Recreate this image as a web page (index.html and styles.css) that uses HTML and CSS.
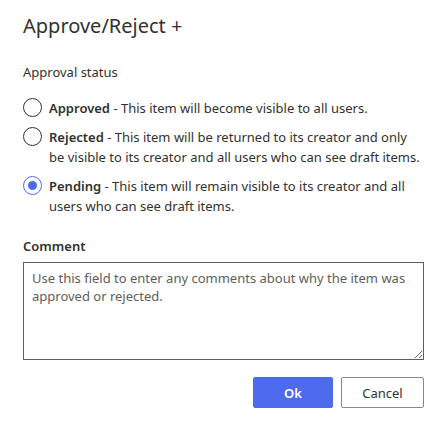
FILE: index.html
```html
<!DOCTYPE html>
<html>
<head>
<meta charset="utf-8">
<link rel="stylesheet" href="styles.css">
</head>
<body>
<div class="dialog">
  <h1 class="title">Approve/Reject +</h1>
  <div class="label status-label">Approval status</div>
  <div class="options">
    <div class="option">
      <span class="radio"></span>
      <div class="opt-text"><b>Approved</b> - This item will become visible to all users.</div>
    </div>
    <div class="option">
      <span class="radio"></span>
      <div class="opt-text"><b>Rejected</b> - This item will be returned to its creator and only<br>be visible to its creator and all users who can see draft items.</div>
    </div>
    <div class="option">
      <span class="radio checked"></span>
      <div class="opt-text"><b>Pending</b> - This item will remain visible to its creator and all<br>users who can see draft items.</div>
    </div>
  </div>
  <div class="label comment-label">Comment</div>
  <textarea class="comment" placeholder="Use this field to enter any comments about why the item was approved or rejected."></textarea>
  <div class="actions">
    <button class="btn primary">Ok</button>
    <button class="btn cancel">Cancel</button>
  </div>
</div>
</body>
</html>
```
FILE: styles.css
```css
html, body {
  margin: 0;
  background: #ffffff;
}
body {
  font-family: "Noto Sans", "Open Sans", sans-serif;
  color: #323130;
  font-size: 13px;
}
.dialog {
  width: 401px;
  padding: 12px 20px 0 23px;
}
.title {
  margin: 0;
  font-size: 20px;
  font-weight: 400;
  line-height: 28px;
}
.label {
  font-size: 13px;
  line-height: 20px;
}
.status-label {
  margin-top: 22px;
}
.options {
  margin-top: 16px;
  display: flex;
  flex-direction: column;
  gap: 9px;
}
.option {
  display: flex;
  gap: 7px;
  align-items: flex-start;
}
.radio {
  flex: none;
  width: 17px;
  height: 17px;
  border: 1px solid #323130;
  border-radius: 50%;
  margin-top: 0;
  position: relative;
  box-sizing: content-box;
}
.radio.checked {
  border-color: #4f6bed;
}
.radio.checked::after {
  content: "";
  position: absolute;
  left: 4px;
  top: 4px;
  width: 9px;
  height: 9px;
  border-radius: 50%;
  background: #4f6bed;
}
.opt-text {
  line-height: 20px;
  font-size: 13px;
  white-space: nowrap;
}
.opt-text b {
  font-weight: 600;
}
.comment-label {
  margin-top: 20px;
  font-weight: 600;
}
.comment {
  display: block;
  box-sizing: border-box;
  width: 401px;
  height: 98px;
  margin-top: 6px;
  border: 1px solid #605e5c;
  border-radius: 0;
  padding: 6px 8px;
  font-family: inherit;
  font-size: 13px;
  line-height: 18px;
  color: #323130;
  resize: vertical;
}
.comment::placeholder {
  color: #605e5c;
}
.actions {
  display: flex;
  justify-content: flex-end;
  gap: 8px;
  margin-top: 17px;
}
.btn {
  height: 31px;
  width: 80px;
  padding: 0;
  font-family: inherit;
  font-size: 13px;
  border: 1px solid #8a8886;
  border-radius: 2px;
  background: #ffffff;
  color: #323130;
}
.btn.cancel {
  width: 83px;
}
.btn.primary {
  background: #4f6bed;
  border-color: #4f6bed;
  color: #ffffff;
  font-weight: 600;
}
```
